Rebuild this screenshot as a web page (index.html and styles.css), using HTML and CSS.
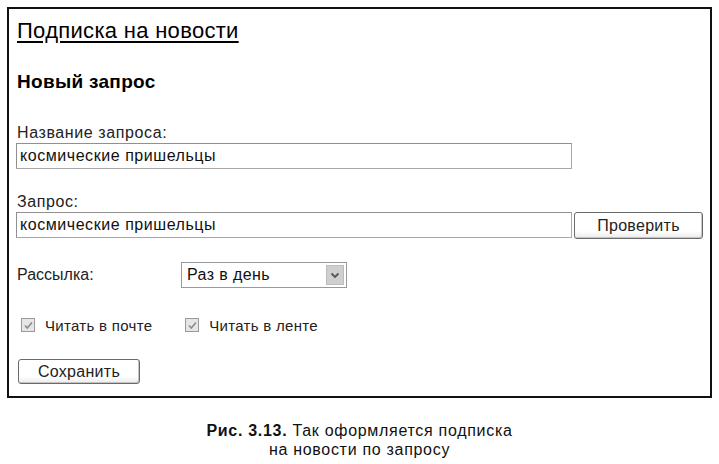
FILE: index.html
```html
<!DOCTYPE html>
<html lang="ru">
<head>
<meta charset="utf-8">
<title>Подписка на новости</title>
<link rel="stylesheet" href="styles.css">
</head>
<body>
<div class="frame">
  <div class="title">Подписка на новости</div>
  <div class="subtitle">Новый запрос</div>
  <div class="label first">Название запроса:</div>
  <input class="field name" type="text" value="космические пришельцы" readonly>
  <div class="label second">Запрос:</div>
  <div class="query-row">
    <input class="field query" type="text" value="космические пришельцы" readonly>
    <div class="btn check">Проверить</div>
  </div>
  <div class="mail-row">
    <div class="mail-label">Рассылка:</div>
    <div class="select">
      <span class="select-text">Раз в день</span>
      <span class="select-arrow">
        <svg width="10" height="7" viewBox="0 0 10 7"><path d="M1.5 1.5 L5 5 L8.5 1.5" fill="none" stroke="#555" stroke-width="1.8"/></svg>
      </span>
    </div>
  </div>
  <div class="checks">
    <div class="chk first-chk">
      <span class="box"><svg width="11" height="11" viewBox="0 0 11 11"><path d="M2 5.5 L4.3 8 L9 2.5" fill="none" stroke="#8c8c8c" stroke-width="1.6"/></svg></span>
      <span class="chk-text">Читать в почте</span>
    </div>
    <div class="chk second-chk">
      <span class="box"><svg width="11" height="11" viewBox="0 0 11 11"><path d="M2 5.5 L4.3 8 L9 2.5" fill="none" stroke="#8c8c8c" stroke-width="1.6"/></svg></span>
      <span class="chk-text">Читать в ленте</span>
    </div>
  </div>
  <div class="btn save">Сохранить</div>
</div>
<div class="caption">
  <div><b>Рис. 3.13.</b> Так оформляется подписка</div>
  <div>на новости по запросу</div>
</div>
</body>
</html>
```

FILE: styles.css
```css
* { box-sizing: border-box; }
html, body { margin: 0; padding: 0; background: #fff; }
body {
  font-family: "Liberation Sans", Arial, sans-serif;
  color: #111;
  width: 719px;
  height: 464px;
  overflow: hidden;
}
.frame {
  margin: 7px 0 0 7px;
  width: 705px;
  height: 391px;
  border: 2px solid #111;
  padding: 10px 0 0 7px;
  display: flex;
  flex-direction: column;
  align-items: flex-start;
}
.title {
  font-size: 22px;
  line-height: 24px;
  letter-spacing: 0.3px;
  text-decoration: underline;
  text-decoration-thickness: 2px;
  text-underline-offset: 3px;
  color: #000;
  padding-left: 1px;
}
.subtitle {
  margin-top: 28px;
  font-size: 19px;
  line-height: 22px;
  letter-spacing: 0.3px;
  font-weight: bold;
  color: #000;
  padding-left: 1px;
}
.label {
  font-size: 16px;
  line-height: 18px;
  letter-spacing: 0.6px;
  padding-left: 1px;
  color: #222;
}
.label.first { margin-top: 31px; }
.label.second { margin-top: 24px; }
.field {
  font-family: "Liberation Sans", Arial, sans-serif;
  font-size: 16px;
  letter-spacing: 0.55px;
  color: #111;
  height: 26px;
  padding: 0 3px;
  border: 1px solid #a8a8a8;
  border-top-color: #909090;
  border-left-color: #909090;
  background: #fff;
  outline: none;
  margin: 0;
}
.field.name { margin-top: 1px; width: 556px; }
.query-row {
  margin-top: 1px;
  display: flex;
  align-items: flex-start;
  gap: 2px;
}
.field.query { width: 556px; }
.btn {
  display: flex;
  align-items: center;
  justify-content: center;
  font-size: 16px;
  letter-spacing: 0.3px;
  color: #222;
  border: 1px solid #6a6a6a;
  border-radius: 3px;
  background: linear-gradient(#fff 0%, #fff 70%, #ececec 100%);
  box-shadow: inset -1px -1px 0 #c4c4c4;
}
.btn.check { width: 129px; height: 27px; }
.btn.save { margin-top: 25px; margin-left: 2px; width: 122px; height: 25px; }
.mail-row {
  margin-top: 23px;
  display: flex;
  align-items: center;
}
.mail-label {
  width: 165px;
  font-size: 16px;
  letter-spacing: 0;
  padding-left: 1px;
  color: #222;
}
.select {
  width: 166px;
  height: 26px;
  border: 1px solid #9a9a9a;
  display: flex;
  align-items: center;
  justify-content: space-between;
  padding: 0 2px 0 5px;
  background: #fff;
}
.select-text {
  font-size: 16px;
  letter-spacing: 0.4px;
  color: #111;
}
.select-arrow {
  width: 18px;
  height: 20px;
  background: #cfcfcf;
  border: 1px solid #bdbdbd;
  display: flex;
  align-items: center;
  justify-content: center;
}
.checks {
  margin-top: 28px;
  display: flex;
  align-items: center;
  height: 18px;
}
.chk {
  display: flex;
  align-items: center;
}
.first-chk { margin-left: 5px; }
.second-chk { margin-left: 33px; }
.box {
  width: 14px;
  height: 14px;
  border: 1px solid #9a9a9a;
  background: #e6e6e6;
  display: flex;
  align-items: center;
  justify-content: center;
}
.chk-text {
  margin-left: 10px;
  font-size: 15px;
  letter-spacing: 0.3px;
  color: #222;
}
.caption {
  margin-top: 23px;
  text-align: center;
  font-size: 16px;
  line-height: 19px;
  letter-spacing: 0.7px;
  color: #111;
}
.caption b { font-weight: bold; }
```
